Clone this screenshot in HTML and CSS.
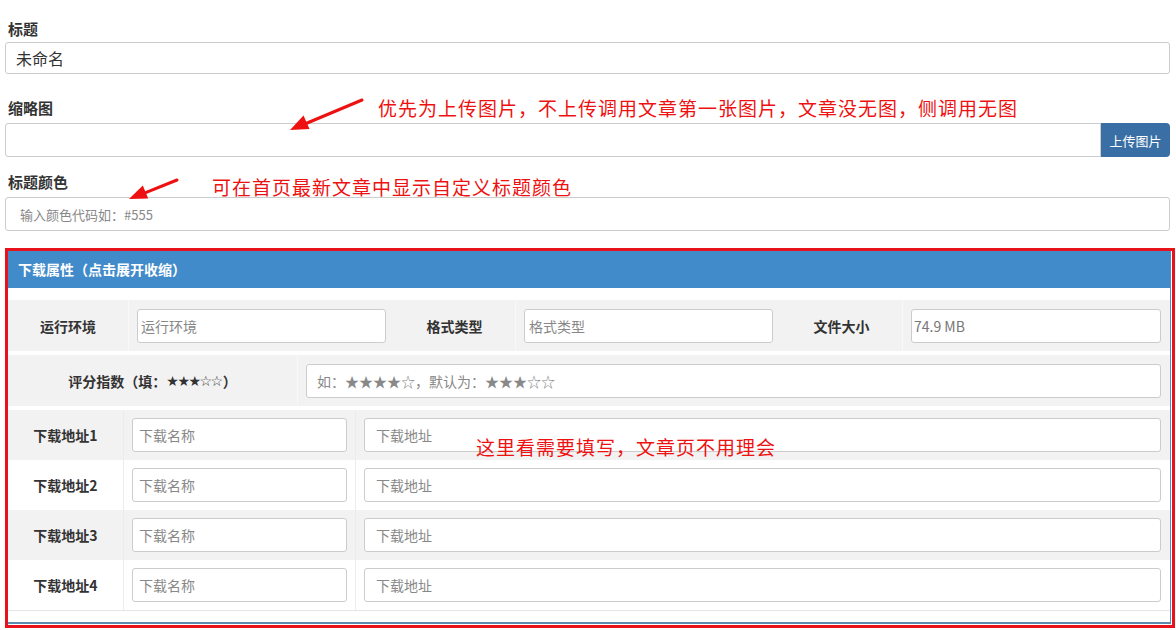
FILE: index.html
```html
<!DOCTYPE html>
<html lang="zh-CN">
<head>
<meta charset="utf-8">
<title>下载属性</title>
<link rel="stylesheet" href="styles.css">
</head>
<body>
<div class="page">
  <div class="group g-title">
    <label class="field-label">标题</label>
    <input class="field-input input-title" value="未命名">
  </div>
  <div class="group g-thumb">
    <label class="field-label">缩略图</label>
    <div class="input-group">
      <input class="field-input input-thumb">
      <button class="btn-upload">上传图片</button>
    </div>
  </div>
  <div class="group g-color">
    <label class="field-label">标题颜色</label>
    <input class="field-input input-color" placeholder="输入颜色代码如：#555">
  </div>

  <div class="annot-box">
    <div class="panel">
      <div class="panel-heading">下载属性（点击展开收缩）</div>
      <div class="panel-body">
        <div class="meta-table">
          <div class="meta-row meta-row-3">
            <div class="cell cell-label">运行环境</div>
            <div class="cell cell-input"><input class="tin pad-3" placeholder="运行环境"></div>
            <div class="cell cell-label">格式类型</div>
            <div class="cell cell-input"><input class="tin pad-4" placeholder="格式类型"></div>
            <div class="cell cell-label">文件大小</div>
            <div class="cell cell-input"><input class="tin pad-2 tin-value" value="74.9 MB"></div>
          </div>
          <div class="meta-row meta-row-2">
            <div class="cell cell-label">评分指数（填：<span class="stars">★★★☆☆</span>）</div>
            <div class="cell cell-input"><input class="tin pad-10" placeholder="如：★★★★☆，默认为：★★★☆☆"></div>
          </div>
        </div>
        <div class="dl-table">
          <div class="dl-row">
            <div class="cell cell-label">下载地址1</div>
            <div class="cell cell-input cell-line"><input class="tin pad-6" placeholder="下载名称"></div>
            <div class="cell cell-input cell-line"><input class="tin pad-11" placeholder="下载地址"></div>
          </div>
          <div class="dl-row">
            <div class="cell cell-label">下载地址2</div>
            <div class="cell cell-input cell-line"><input class="tin pad-6" placeholder="下载名称"></div>
            <div class="cell cell-input cell-line"><input class="tin pad-11" placeholder="下载地址"></div>
          </div>
          <div class="dl-row">
            <div class="cell cell-label">下载地址3</div>
            <div class="cell cell-input cell-line"><input class="tin pad-6" placeholder="下载名称"></div>
            <div class="cell cell-input cell-line"><input class="tin pad-11" placeholder="下载地址"></div>
          </div>
          <div class="dl-row">
            <div class="cell cell-label">下载地址4</div>
            <div class="cell cell-input cell-line"><input class="tin pad-6" placeholder="下载名称"></div>
            <div class="cell cell-input cell-line"><input class="tin pad-11" placeholder="下载地址"></div>
          </div>
        </div>
      </div>
    </div>
  </div>

  <svg class="arrows" width="1176" height="630" viewBox="0 0 1176 630">
    <line x1="362" y1="100" x2="306" y2="123.5" stroke="#ee1111" stroke-width="3" stroke-linecap="round"/>
    <polygon points="290,130 309.5,129 303.5,115.5" fill="#ee1111"/>
    <line x1="177" y1="180" x2="145" y2="192.8" stroke="#ee1111" stroke-width="3" stroke-linecap="round"/>
    <polygon points="129,199 148.2,198.4 142.8,185.4" fill="#ee1111"/>
  </svg>
  <p class="note note-1">优先为上传图片，不上传调用文章第一张图片，文章没无图，侧调用无图</p>
  <p class="note note-2">可在首页最新文章中显示自定义标题颜色</p>
  <p class="note note-3">这里看需要填写，文章页不用理会</p>
</div>
</body>
</html>
```

FILE: styles.css
```css
* {
  box-sizing: border-box;
}

body {
  margin: 0;
  background: #fff;
  font-family: "Noto Sans CJK SC", "Noto Sans", sans-serif;
  color: #333;
}

.page {
  position: relative;
  padding: 19px 6px 0 5px;
  height: 630px;
  overflow: hidden;
}

.field-label {
  display: block;
  font-size: 15px;
  font-weight: bold;
  line-height: 20px;
  padding-left: 3px;
  color: #333;
}

.g-title .field-label {
  margin-bottom: 3px;
}

.g-thumb {
  margin-top: 24px;
}

.g-color {
  margin-top: 15px;
}

.g-thumb .field-label,
.g-color .field-label {
  margin-bottom: 5px;
}

.field-input {
  display: block;
  width: 100%;
  height: 34px;
  border: 1px solid #ccc;
  border-radius: 3px;
  font-family: inherit;
  font-size: 14px;
  color: #333;
  padding: 0 12px;
  background: #fff;
  outline: none;
}

.input-title {
  height: 32px;
  font-size: 16px;
  padding-left: 10px;
}

.input-color {
  font-size: 13px;
  padding-left: 14px;
}

::placeholder {
  color: #888;
  opacity: 1;
}

.input-group {
  display: flex;
}

.input-thumb {
  flex: 1;
  border-radius: 3px 0 0 3px;
}

.btn-upload {
  width: 69px;
  height: 34px;
  border: 0;
  background: #3a6fa5;
  color: #fff;
  font-family: inherit;
  font-size: 13px;
  border-radius: 0 4px 4px 0;
  padding: 0;
}

.annot-box {
  margin-top: 17px;
  margin-right: -5px;
  border: 3px solid #e8121a;
  padding-bottom: 1px;
}

.panel {
  margin-right: 1px;
  border-right: 1px solid #5a8bb0;
  border-bottom: 2px solid #5a8bb0;
  background: #fff;
}

.panel-heading {
  background: #428bca;
  color: #fff;
  font-size: 14px;
  font-weight: bold;
  height: 37px;
  line-height: 37px;
  padding-left: 10px;
}

.panel-body {
  padding: 12px 0 11px;
}

.meta-table {
  display: flex;
  flex-direction: column;
  gap: 4px;
  margin-bottom: 4px;
}

.meta-row {
  display: grid;
  height: 51px;
  background: #f2f2f2;
}

.meta-row-3 {
  grid-template-columns: 120px 266px 121px 266px 121px 1fr;
}

.meta-row-2 {
  grid-template-columns: 289px 1fr;
}

.meta-row .cell-input {
  border-left: 1px solid #f8f8f8;
}

.cell {
  display: flex;
  align-items: center;
  padding: 0 8px;
}

.cell-label {
  justify-content: center;
  font-size: 14px;
  font-weight: bold;
  color: #333;
  white-space: nowrap;
}

.stars {
  font-family: "DejaVu Sans", sans-serif;
  font-size: 14px;
  font-weight: normal;
  letter-spacing: -1.5px;
  margin-right: 1px;
}

.meta-row-3 .cell-input:last-child,
.meta-row-2 .cell-input,
.dl-row .cell-input:last-child {
  padding-right: 9px;
}

.tin {
  display: block;
  width: 100%;
  height: 34px;
  border: 1px solid #ccc;
  border-radius: 3px;
  background: #fff;
  font-family: inherit;
  font-size: 14px;
  color: #333;
  outline: none;
}

.tin-value {
  color: #777;
}

.pad-2 { padding-left: 2px; }
.pad-3 { padding-left: 3px; }
.pad-4 { padding-left: 4px; }
.pad-6 { padding-left: 6px; }
.pad-10 { padding-left: 10px; }
.pad-11 { padding-left: 11px; }

.dl-table {
  border-bottom: 1px solid #e6e6e6;
}

.dl-row {
  display: grid;
  grid-template-columns: 115px 232px 1fr;
  height: 50px;
  background: #fff;
}

.dl-row:nth-child(odd) {
  background: #f2f2f2;
}

.cell-line {
  border-left: 1px solid #ececec;
}

.arrows {
  position: absolute;
  left: 0;
  top: 0;
  pointer-events: none;
}

.note {
  position: absolute;
  margin: 0;
  color: #ee1111;
  font-size: 19px;
  letter-spacing: 1px;
  line-height: 24px;
  white-space: nowrap;
}

.note-1 {
  left: 378px;
  top: 96px;
}

.note-2 {
  left: 212px;
  top: 175px;
}

.note-3 {
  left: 476px;
  top: 435px;
}
```
